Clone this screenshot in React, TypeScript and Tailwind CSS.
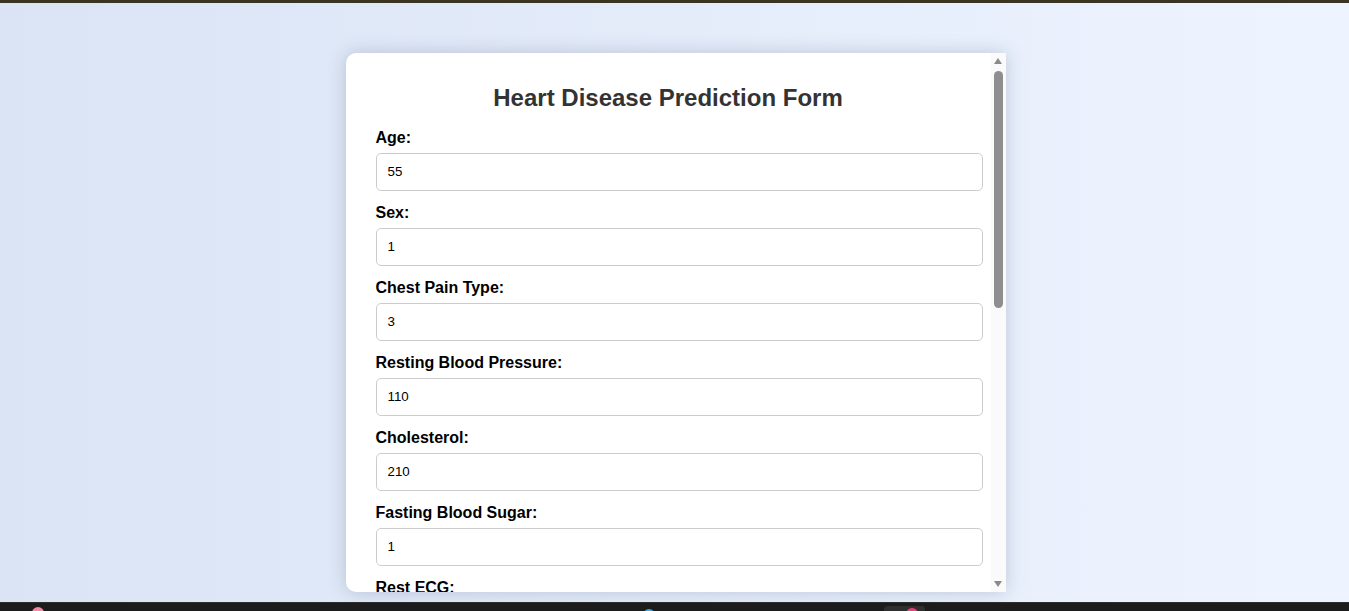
import React from "react";

const fields: [string, string][] = [
  ["Age:", "55"],
  ["Sex:", "1"],
  ["Chest Pain Type:", "3"],
  ["Resting Blood Pressure:", "110"],
  ["Cholesterol:", "210"],
  ["Fasting Blood Sugar:", "1"],
  ["Rest ECG:", "0"],
  ["Max Heart Rate:", "150"],
];

export default function App() {
  return (
    <div className="w-[1349px] h-[611px] overflow-hidden flex flex-col font-['Liberation_Sans',Arial,sans-serif]">
      <div className="h-[3px] bg-[#3a3422] shrink-0" />
      <div className="flex-1 flex justify-center bg-[linear-gradient(to_right,#dae4f5,#eef4ff)] pt-[50px] pb-[10px] pl-[2px]">
        <div className="w-[660px] h-[539px] bg-white rounded-l-[10px] shadow-[0_0_18px_rgba(60,80,110,0.25)] flex overflow-hidden">
          <div className="flex-1 overflow-hidden pl-[30px] pr-[30px] pt-[31px]">
            <h2 className="text-[24px] leading-[28px] font-bold text-[#333] text-center mb-[17px] whitespace-nowrap">
              Heart Disease Prediction Form
            </h2>
            {fields.map(([label, value]) => (
              <div key={label}>
                <div className="text-[16px] leading-[18px] font-bold text-black mb-[6px]">{label}</div>
                <div className="w-[607px] h-[38px] border border-[#ccc] rounded-[5px] mb-[13px] px-[11px] flex items-center text-[13.33px] text-black">
                  {value}
                </div>
              </div>
            ))}
          </div>
          <div className="w-[15px] bg-[#fafafa] flex flex-col items-center shrink-0">
            <svg width="10" height="8" viewBox="0 0 10 8" className="mt-[4px]">
              <polygon points="5,1 9,7 1,7" fill="#8a8a8a" />
            </svg>
            <div className="w-[9px] h-[237px] bg-[#8e8e8e] rounded-full mt-[6px]" />
            <div className="flex-1" />
            <svg width="10" height="8" viewBox="0 0 10 8" className="mb-[4px]">
              <polygon points="1,1 9,1 5,7" fill="#8a8a8a" />
            </svg>
          </div>
        </div>
      </div>
      <div className="h-[9px] shrink-0 bg-[#1c1c1c] border-t border-[#2e2e2e] relative">
        <div className="absolute left-[32px] top-[4px] w-[12px] h-[12px] rounded-full bg-[#f08aa6]" />
        <div className="absolute left-[643px] top-[6px] w-[12px] h-[12px] rounded-full bg-[#3aa8e8]" />
        <div className="absolute left-[884px] top-[3px] w-[41px] h-[10px] rounded-[4px] bg-[#2f2f2f]" />
        <div className="absolute left-[906px] top-[5px] w-[12px] h-[12px] rounded-full bg-[#e8407a]" />
      </div>
    </div>
  );
}
